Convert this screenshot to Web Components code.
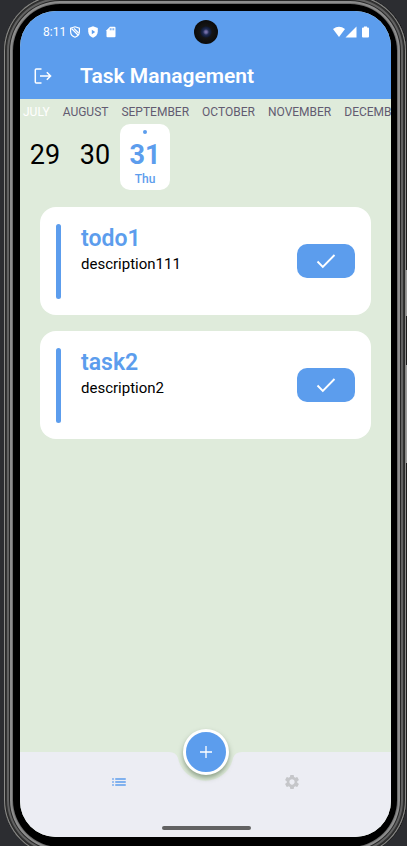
<!DOCTYPE html>
<html lang="en">
<head>
<meta charset="utf-8">
<meta name="viewport" content="width=device-width, initial-scale=1">
<title>Task Management</title>
<style>
  :root { --blue: #5c9ded; --mint: #dfebdb; --nav: #ecedf3; }
  html, body { margin: 0; height: 100%; overflow: hidden; background: #2c2d31; font-family: Roboto, "Liberation Sans", sans-serif; }
</style>
</head>
<body>
<phone-frame>
  <header>
    <status-bar>8:11</status-bar>
    <app-bar>Task Management</app-bar>
  </header>
  <month-strip>
    <month-tab selected>JULY</month-tab><month-tab>AUGUST</month-tab><month-tab>SEPTEMBER</month-tab><month-tab>OCTOBER</month-tab><month-tab>NOVEMBER</month-tab><month-tab>DECEMBER</month-tab>
  </month-strip>
  <day-strip>
    <day-cell>29</day-cell><day-cell>30</day-cell><day-cell selected weekday="Thu">31</day-cell>
  </day-strip>
  <task-list>
    <task-card><span slot="title">todo1</span>description111</task-card>
    <task-card><span slot="title">task2</span>description2</task-card>
  </task-list>
  <bottom-nav slot="nav"></bottom-nav>
</phone-frame>

<script>
const define = (name, html, setup) => {
  const tpl = document.createElement('template');
  tpl.innerHTML = html;
  customElements.define(name, class extends HTMLElement {
    constructor() {
      super();
      this.attachShadow({ mode: 'open' }).append(tpl.content.cloneNode(true));
      if (setup) setup(this, this.shadowRoot);
    }
  });
};
const reset = 'button{font:inherit;color:inherit;border:0;padding:0;margin:0;background:none;cursor:pointer}svg{display:block}';

/* Device body: metal rings, black bezel, rounded display */
define('phone-frame', `<style>
  :host{display:flex;position:relative;box-sizing:border-box;height:calc(100vh + 15px);margin:-5px 1px 0 4px;
    padding:16px 15px 19px 16px;border-radius:56px;background:#000;
    box-shadow:inset 0 0 0 1px #8c8c8a,inset 0 0 0 2px #2b2b2b,inset 0 0 0 3px #333,inset 0 0 0 5px #626262,inset 0 0 0 6px #262626,inset 0 0 0 8px #8d8d8d,inset 0 0 0 9px #6c6c6c,1px 0 #1c1c1c}
  .screen{flex:1;min-width:0;display:flex;flex-direction:column;border-radius:36px;overflow:hidden;background:var(--mint)}
  .body{flex:1;min-height:0}
  i{position:absolute;right:-1px;width:1px;background:#999}
  .power{top:275px;height:46px}.volume{top:370px;height:98px}
  </style><i class="power"></i><i class="volume"></i>
  <div class="screen"><div class="body"><slot></slot></div><slot name="nav"></slot></div>`);

define('status-bar', `<style>${reset}
  :host{display:grid;grid-template-columns:1fr 24px 1fr;align-items:center;height:42px;padding:0 22px 0 23px;background:var(--blue);color:#fff;font-size:12px;line-height:16px}
  .left,.icons,.right{display:flex;align-items:center}
  .left{gap:3px}.icons{gap:6px}.right{justify-content:flex-end}
  .cam{width:24px;height:24px;border-radius:50%;background:radial-gradient(circle at 50% 50%,#746fa8 0 1px,#202b52 3px,#111b35 5px,#151515 6px,#0b0b0b 12px)}
  </style>
  <div class="left"><span><slot></slot></span><div class="icons">
    <svg width="12" height="12" viewBox="0 0 12 12" fill="none" stroke="#fff" stroke-width="1.2"><path d="M6 .8 10.4 2.3V5.600C10.400 8.300 8.500 10.500 6 11.300 3.500 10.500 1.600 8.300 1.600 5.600V2.300Z"/><path d="M2.500 2.500 9 9M5 2.300 9.600 7"/></svg>
    <svg width="12" height="12" viewBox="0 0 12 12"><path fill="#fff" d="M6 .3 10.800 2V5.600C10.800 8.600 8.700 11 6 11.800 3.300 11 1.200 8.600 1.200 5.600V2Z"/><path fill="#5c9ded" d="M4.800 3.800 8.200 6 4.800 8.200Z"/></svg>
    <svg width="12" height="12" viewBox="0 0 12 12"><path fill="#fff" d="M5 .8H9.500Q10.500 .8 10.500 1.800V10.300Q10.500 11.300 9.500 11.300H2.500Q1.500 11.300 1.500 10.300V4.300Z"/><path stroke="#5c9ded" stroke-width=".9" d="M5.300 2.200V4.300M7 2.200V4.300M8.700 2.200V4.300"/></svg>
  </div></div>
  <div class="cam"></div>
  <div class="right">
    <svg width="36" height="12" viewBox="0 0 36 12" fill="#fff"><path d="M0 3Q6-1.600 12 3L6 11Z"/><path d="M23.500 .5V11.500H12.500Z"/><path d="M31 .5H34V1.600H35Q36 1.600 36 2.600V10.500Q36 11.500 35 11.500H30Q29 11.500 29 10.500V2.600Q29 1.600 30 1.600H31Z"/></svg>
  </div>`);

define('app-bar', `<style>${reset}
  :host{display:flex;align-items:center;gap:27px;height:46px;padding:0 13px;background:var(--blue);color:#fff}
  h1{margin:0;font-size:21px;line-height:24px;font-weight:600;white-space:nowrap}
  </style>
  <button aria-label="Log out"><svg width="20" height="20" viewBox="0 0 20 20" fill="none" stroke="#fff" stroke-width="1.5"><path d="M8.500 3H3.300Q2.300 3 2.300 4V16Q2.300 17 3.300 17H8.500M7 10H17.500M13.800 6.200 17.600 10 13.800 13.800"/></svg></button>
  <h1><slot></slot></h1>`);

define('month-strip', `<style>:host{display:flex;gap:13px;padding:4px 0 0 3px;overflow:hidden}</style><slot></slot>`);
define('month-tab', `<style>${reset}
  :host{display:block;flex:none;color:#625b71;font-size:12px;line-height:18px}
  :host([selected]){color:#fff}
  button{display:block}
  </style><button><slot></slot></button>`);

define('day-strip', `<style>:host{display:flex;padding:3px 0 0}</style><slot></slot>`);
define('day-cell', `<style>${reset}
  :host{display:block;flex:none;width:50px;height:66px;border-radius:10px;color:#000;font-size:27px;line-height:34px}
  :host([selected]){background:#fff;color:var(--blue);font-weight:700}
  button{display:flex;flex-direction:column;align-items:center;width:100%;height:100%;padding-top:6px}
  i{width:4px;height:4px;border-radius:50%;margin-bottom:4px}
  :host([selected]) i{background:var(--blue)}
  small{font-size:12px;line-height:14px;font-weight:500}
  </style><button><i></i><slot></slot><small></small></button>`,
  (el, root) => { root.querySelector('small').textContent = el.getAttribute('weekday') || ''; });

define('task-list', `<style>:host{display:flex;flex-direction:column;gap:16px;padding:17px 20px}</style><slot></slot>`);
define('task-card', `<style>${reset}
  :host{display:flex;align-items:center;box-sizing:border-box;height:108px;padding:16px;border-radius:16px;background:#fff}
  .mark{width:5px;height:75px;border-radius:3px;background:var(--blue)}
  .text{flex:1;align-self:flex-start;min-width:0;margin-left:20px}
  h2{margin:0;color:var(--blue);font-size:23px;line-height:32px;font-weight:600}
  p{margin:0;color:#000;font-size:15px;line-height:18px}
  button{display:grid;place-items:center;width:58px;height:34px;border-radius:10px;background:var(--blue)}
  </style><div class="mark"></div>
  <div class="text"><h2><slot name="title"></slot></h2><p><slot></slot></p></div>
  <button aria-label="Complete task"><svg width="22" height="22" viewBox="0 0 22 22" fill="none" stroke="#fff" stroke-width="1.900"><path d="M2.500 11.500 7.800 16.800 19.500 5"/></svg></button>`);

define('bottom-nav', `<style>${reset}
  :host{display:block;position:relative;height:85px}
  .bg{display:flex;height:100%}
  .side{flex:1;background:var(--nav)}
  .bg svg{flex:none;fill:var(--nav)}
  .items{position:absolute;inset:19px 13px auto;display:grid;grid-template-columns:1fr 1fr;place-items:center}
  .fab{position:absolute;left:calc(50% - 23px);top:-23px;width:46px;height:46px;border:3px solid #fff;border-radius:50%;background:var(--blue);display:grid;place-items:center;box-shadow:0 3px 5px #48603f88}
  .handle{position:absolute;left:calc(50% - 44px);bottom:7px;width:89px;height:4px;border-radius:2px;background:#626262}
  </style>
  <div class="bg"><div class="side"></div><svg width="81" height="85" viewBox="0 0 81 85"><path d="M0 0H4Q11 0 13 6A28 28 0 0 0 68 6Q70 0 77 0H81V85H0Z"/></svg><div class="side"></div></div>
  <div class="items">
    <button aria-label="Tasks"><svg width="18" height="18" viewBox="0 0 24 24" fill="#5c9ded"><path d="M3 13h2v-2H3v2zm0 4h2v-2H3v2zm0-8h2V7H3v2zm4 4h14v-2H7v2zm0 4h14v-2H7v2zM7 7v2h14V7H7z"/></svg></button>
    <button aria-label="Settings"><svg width="22" height="22" viewBox="-3 -3 30 30" fill="#c5c6c9"><path d="M19.140 12.940c.04-.3.06-.61.06-.94 0-.32-.02-.64-.07-.94l2.030-1.580c.18-.14.23-.41.12-.61l-1.920-3.320c-.12-.22-.37-.29-.59-.22l-2.390.96c-.5-.38-1.030-.7-1.620-.94l-.36-2.540c-.04-.24-.24-.41-.48-.41h-3.840c-.24 0-.43.17-.47.41l-.36 2.540c-.59.24-1.130.57-1.620.94l-2.390-.96c-.22-.08-.47 0-.59.22L2.740 8.870c-.12.21-.08.47.12.61l2.030 1.580c-.05.3-.09.63-.09.94s.02.64.07.94l-2.030 1.580c-.18.14-.23.41-.12.61l1.920 3.320c.12.22.37.29.59.22l2.390-.96c.5.38 1.030.7 1.620.94l.36 2.540c.05.24.24.41.48.41h3.840c.24 0 .44-.17.47-.41l.36-2.540c.59-.24 1.130-.56 1.620-.94l2.390.96c.22.08.47 0 .59-.22l1.920-3.320c.12-.22.07-.47-.12-.61l-2.010-1.580zM12 15.600c-1.980 0-3.600-1.620-3.600-3.600s1.620-3.600 3.600-3.600 3.600 1.620 3.600 3.600-1.620 3.600-3.600 3.600z"/></svg></button>
  </div>
  <button class="fab" aria-label="Add task"><svg width="12" height="12" viewBox="0 0 12 12" stroke="#fff" stroke-width="1.300"><path d="M6 0V12M0 6H12"/></svg></button>
  <div class="handle"></div>`);
</script>
</body>
</html>
